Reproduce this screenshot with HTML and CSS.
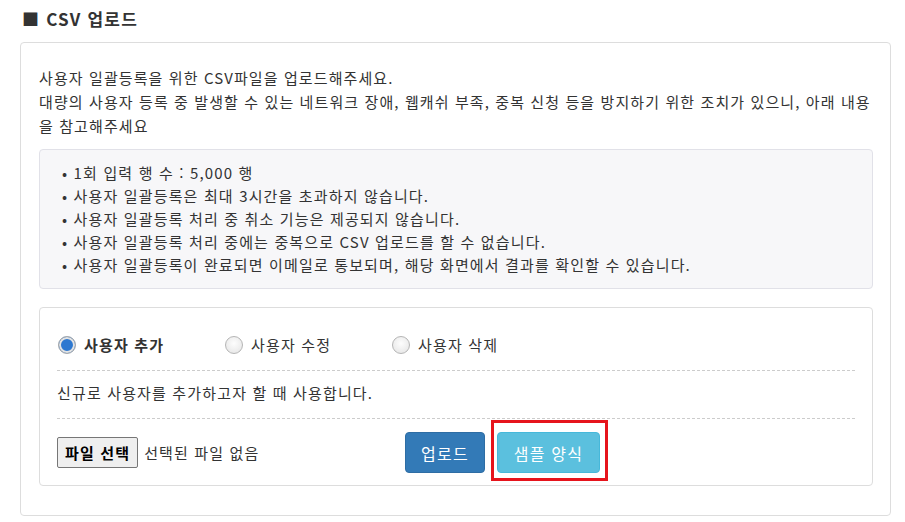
FILE: index.html
```html
<!DOCTYPE html>
<html lang="ko">
<head>
<meta charset="utf-8">
<title>CSV 업로드</title>
<link rel="stylesheet" href="styles.css">
</head>
<body>
<h2 class="title">■ CSV 업로드</h2>
<div class="card">
  <p class="intro">사용자 일괄등록을 위한 CSV파일을 업로드해주세요.<br>대량의 사용자 등록 중 발생할 수 있는 네트워크 장애, 웹캐쉬 부족, 중복 신청 등을 방지하기 위한 조치가 있으니, 아래 내용<br>을 참고해주세요</p>
  <ul class="notice">
    <li>• 1회 입력 행 수 : 5,000 행</li>
    <li>• 사용자 일괄등록은 최대 3시간을 초과하지 않습니다.</li>
    <li>• 사용자 일괄등록 처리 중 취소 기능은 제공되지 않습니다.</li>
    <li>• 사용자 일괄등록 처리 중에는 중복으로 CSV 업로드를 할 수 없습니다.</li>
    <li>• 사용자 일괄등록이 완료되면 이메일로 통보되며, 해당 화면에서 결과를 확인할 수 있습니다.</li>
  </ul>
  <div class="panel">
    <div class="options">
      <label class="option checked"><span class="radio"></span><span class="opt-text">사용자 추가</span></label>
      <label class="option"><span class="radio"></span><span class="opt-text">사용자 수정</span></label>
      <label class="option"><span class="radio"></span><span class="opt-text">사용자 삭제</span></label>
    </div>
    <div class="desc">신규로 사용자를 추가하고자 할 때 사용합니다.</div>
    <div class="actions">
      <div class="file">
        <span class="file-btn">파일 선택</span>
        <span class="file-name">선택된 파일 없음</span>
      </div>
      <button class="btn btn-primary">업로드</button>
      <span class="highlight"><button class="btn btn-info">샘플 양식</button></span>
    </div>
  </div>
</div>
</body>
</html>
```
FILE: styles.css
```css
* { box-sizing: border-box; }
html, body { margin: 0; padding: 0; background: #fff; }
body {
  padding: 7px 14px 0 20px;
  font-family: "Noto Sans CJK KR", "Noto Sans", sans-serif;
  font-size: 15px;
  letter-spacing: 1.15px;
  color: #333;
}
.title {
  margin: 0 0 11px 2px;
  font-size: 17px;
  line-height: 24px;
  font-weight: bold;
  color: #333;
  letter-spacing: 1.2px;
}
.card {
  border: 1px solid #ddd;
  border-radius: 4px;
  padding: 23px 17px 29px 18px;
  height: 474px;
}
.intro {
  margin: 0;
  line-height: 24px;
  white-space: nowrap;
  letter-spacing: 1.1px;
}
.notice {
  list-style: none;
  margin: 11px 0 0 0;
  padding: 11px 20px 12px 22px;
  background: #f7f7f9;
  border: 1px solid #e1e1e8;
  border-radius: 4px;
  line-height: 23px;
}
.panel {
  margin-top: 18px;
  border: 1px solid #ddd;
  border-radius: 4px;
  padding: 22px 17px 12px 17px;
}
.options {
  display: flex;
  align-items: center;
  height: 30px;
  box-sizing: content-box;
  padding-bottom: 10px;
  border-bottom: 1px dashed #ccc;
}
.option {
  width: 167px;
  display: flex;
  align-items: center;
  gap: 8px;
  line-height: 24px;
}
.option.checked .opt-text { font-weight: bold; }
.radio {
  width: 18px;
  height: 18px;
  border-radius: 50%;
  border: 1px solid #b5b5b5;
  background: radial-gradient(circle at 50% 40%, #fdfdfd 0%, #e3e3e3 100%);
  margin-left: 1px;
  flex: none;
}
.option.checked .radio {
  background: #2d78d0;
  box-shadow: inset 0 0 0 2px #e3e3e3;
  border-color: #aaa;
}
.desc {
  padding: 10px 0 13px;
  line-height: 24px;
  border-bottom: 1px dashed #ccc;
}
.actions {
  display: flex;
  align-items: center;
  padding-top: 13px;
}
.file {
  width: 348px;
  display: flex;
  align-items: center;
  gap: 6px;
}
.file-btn {
  display: inline-block;
  height: 31px;
  line-height: 29px;
  padding: 0 7px;
  border: 1px solid #767676;
  border-radius: 2px;
  background: #efefef;
  color: #000;
  font-weight: bold;
  font-size: 15px;
}
.file-name { line-height: 24px; color: #333; }
.btn {
  height: 41px;
  border-radius: 4px;
  color: #fff;
  font-family: "Noto Sans CJK KR", "Noto Sans", sans-serif;
  font-size: 16px;
  letter-spacing: 1.2px;
  padding: 0;
  cursor: pointer;
}
.btn-primary {
  width: 80px;
  background: #337ab7;
  border: 1px solid #2e6da4;
}
.btn-info {
  width: 103px;
  background: #5bc0de;
  border: 1px solid #46b8da;
}
.highlight {
  position: relative;
  display: inline-block;
  margin-left: 12px;
  height: 41px;
}
.highlight::after {
  content: "";
  position: absolute;
  left: -6px;
  right: -8px;
  top: -12px;
  bottom: -8px;
  border: 3px solid #e6141c;
  pointer-events: none;
}
```
